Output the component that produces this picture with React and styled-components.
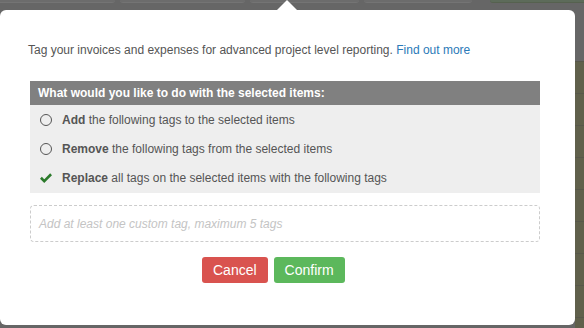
import React from "react";
import styled, { createGlobalStyle } from "styled-components";

const Global = createGlobalStyle`
  html, body { margin: 0; padding: 0; background: #666666; }
  body { font-family: "Liberation Sans", Arial, sans-serif; width: 584px; height: 328px; overflow: hidden; }
  #root { position: relative; width: 584px; height: 328px; }
`;

const Backdrop = styled.div`
  position: relative;
  width: 584px;
  height: 328px;
  display: flex;
  flex-direction: column;
  background: #666666;
  overflow: hidden;
`;

const TopBar = styled.div`
  display: flex;
  gap: 5px;
  height: 3px;
  margin-left: -6px;
`;

const TopButton = styled.div`
  flex: 0 0 ${(p) => p.$w}px;
  height: 2px;
  margin-left: ${(p) => p.$gapLeft || 0}px;
  background: ${(p) => (p.$green ? "#5d6b5a" : "#6c6c6c")};
  border-bottom: 1px solid ${(p) => (p.$green ? "#56614f" : "#747474")};
  border-radius: 0 0 3px 3px;
`;

const Main = styled.div`
  flex: 1;
  display: flex;
  justify-content: flex-end;
`;

const SideTable = styled.div`
  width: 9px;
  display: flex;
  flex-direction: column;
  padding-top: 58px;
`;

const SideRow = styled.div`
  height: 31px;
  background: #60604b;
  border-top: 1px solid #57574a;
`;

const Popover = styled.div`
  position: absolute;
  top: 10px;
  left: 0;
  width: 575px;
  height: 315px;
  background: #ffffff;
  border-radius: 6px;
  box-sizing: border-box;
  padding: 33px 35px 0 28px;
  color: #555555;
  font-size: 12px;
`;

const Arrow = styled.div`
  position: absolute;
  top: -10px;
  left: 276px;
  width: 0;
  height: 0;
  border-left: 11px solid transparent;
  border-right: 11px solid transparent;
  border-bottom: 11px solid #ffffff;
`;

const Intro = styled.p`
  margin: 0 0 24px 0;
  line-height: 14px;
  color: #555555;
`;

const Link = styled.a`
  color: #2a7ab8;
  text-decoration: none;
`;

const Choices = styled.div`
  margin-left: 2px;
  background: #eeeeee;
  display: flex;
  flex-direction: column;
`;

const ChoicesHeader = styled.div`
  height: 24px;
  background: #808080;
  color: #ffffff;
  font-weight: bold;
  display: flex;
  align-items: center;
  padding-left: 8px;
`;

const ChoiceList = styled.div`
  display: flex;
  flex-direction: column;
  padding: 0 0 1px 0;
`;

const Choice = styled.label`
  height: 29px;
  display: flex;
  align-items: center;
  gap: 10px;
  padding-left: 10px;
  color: #555555;
  b { color: #555555; }
`;

const RadioMark = styled.span`
  width: 10px;
  height: 10px;
  border: 1px solid #555555;
  border-radius: 50%;
  box-sizing: content-box;
  flex: 0 0 auto;
`;

const CheckBox = styled.span`
  width: 12px;
  height: 12px;
  display: flex;
  align-items: center;
  justify-content: center;
  flex: 0 0 auto;
`;

const TagInput = styled.div`
  margin: 12px 0 0 2px;
  height: 37px;
  box-sizing: border-box;
  border: 1px dashed #cccccc;
  border-radius: 4px;
  display: flex;
  align-items: center;
  padding-left: 8px;
  color: #c4c4c4;
  font-style: italic;
`;

const Actions = styled.div`
  display: flex;
  gap: 6px;
  margin-top: 15px;
  padding-left: 174px;
`;

const Button = styled.button`
  height: 26px;
  padding: 0 11px;
  border: none;
  border-radius: 3px;
  background: ${(p) => (p.$variant === "danger" ? "#d9534f" : "#5cb85c")};
  color: #ffffff;
  font-family: "Liberation Sans", Arial, sans-serif;
  font-size: 14px;
  cursor: pointer;
`;

const CheckIcon = () => (
  <svg width="13" height="11" viewBox="0 0 13 11">
    <path d="M1 5.8 L4.6 9.4 L12 2" fill="none" stroke="#2b7a2b" strokeWidth="2.8" strokeLinecap="butt" strokeLinejoin="miter" />
  </svg>
);

const options = [
  { key: "add", bold: "Add", rest: " the following tags to the selected items", checked: false },
  { key: "remove", bold: "Remove", rest: " the following tags from the selected items", checked: false },
  { key: "replace", bold: "Replace", rest: " all tags on the selected items with the following tags", checked: true },
];

export default function App() {
  return (
    <>
      <Global />
      <Backdrop>
        <TopBar>
          <TopButton $w={121} />
          <TopButton $w={125} />
          <TopButton $w={109} />
          <TopButton $w={108} />
          <TopButton $w={100} $green $gapLeft={13} />
        </TopBar>
        <Main>
          <SideTable>
            {Array.from({ length: 9 }).map((_, i) => (
              <SideRow key={i} />
            ))}
          </SideTable>
        </Main>
        <Popover>
          <Arrow />
          <Intro>
            Tag your invoices and expenses for advanced project level reporting. <Link href="#">Find out more</Link>
          </Intro>
          <Choices>
            <ChoicesHeader>What would you like to do with the selected items:</ChoicesHeader>
            <ChoiceList>
              {options.map((o) => (
                <Choice key={o.key}>
                  {o.checked ? (
                    <CheckBox>
                      <CheckIcon />
                    </CheckBox>
                  ) : (
                    <RadioMark />
                  )}
                  <span>
                    <b>{o.bold}</b>
                    {o.rest}
                  </span>
                </Choice>
              ))}
            </ChoiceList>
          </Choices>
          <TagInput>Add at least one custom tag, maximum 5 tags</TagInput>
          <Actions>
            <Button $variant="danger">Cancel</Button>
            <Button $variant="success">Confirm</Button>
          </Actions>
        </Popover>
      </Backdrop>
    </>
  );
}
